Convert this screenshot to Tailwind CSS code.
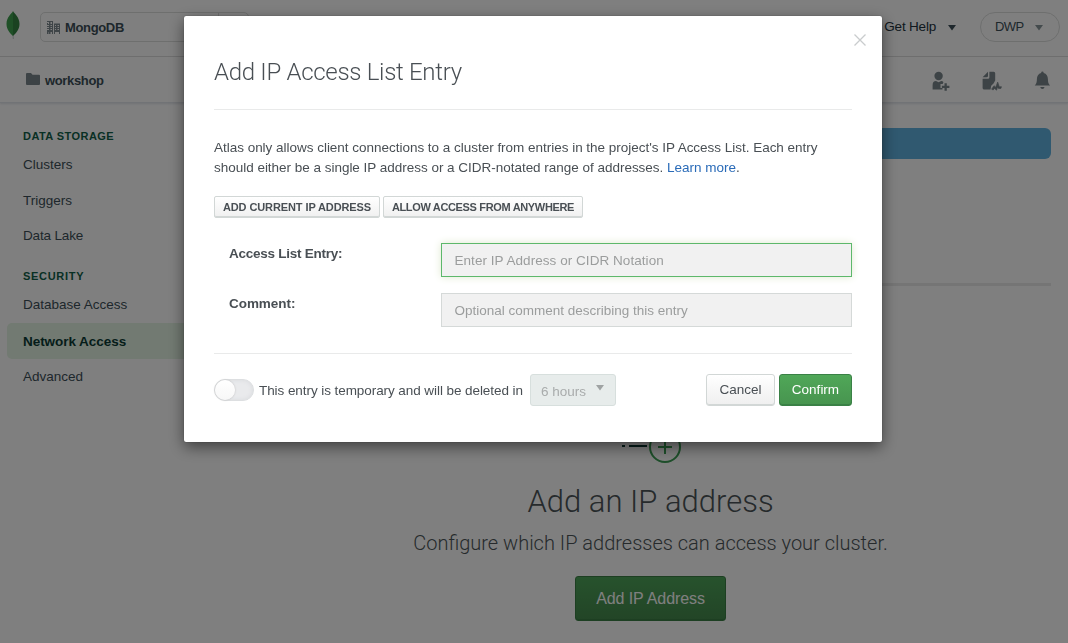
<!DOCTYPE html>
<html lang="en">
<head>
<meta charset="utf-8">
<title>Network Access</title>
<script src="https://cdn.jsdelivr.net/npm/@tailwindcss/browser@4"></script>
</head>
<body class="h-[643px] w-[1068px] overflow-hidden bg-white font-['Liberation_Sans',Arial,sans-serif] text-[13.5px] text-[#3d4f58]">
<div class="flex h-[643px] flex-col">
  <!-- Organization bar -->
  <header class="flex h-[57px] shrink-0 items-start justify-between border-b border-[#dcdcdc] pl-[6px] pr-[8px]">
    <div class="flex items-start">
      <svg class="mt-[10px] h-[30px] w-[15px]" viewBox="0 0 15 30"><path d="M6.600 24h.8l.3 5h-.9z" fill="#b8c4c2"/><path d="M7 1C5.500 4 .5 7 .5 14c0 6 4 9.500 6.500 12z" fill="#3fa04f"/><path d="M7 1c1.500 3 6.500 6 6.500 13 0 6-4 9.500-6.500 12z" fill="#358443"/></svg>
      <div class="mt-[12px] ml-[19px] flex h-[30px] w-[209px] items-center rounded-[5px] border border-[#dcdedd] pl-[6px]">
        <svg class="h-[13px] w-[13px]" viewBox="0 0 13 13" fill="#7f8b91"><path d="M0 0h6v1H0zM0 2h1v1H0zM2 1h1.500v12H2zM5 1h1v12H5zM0 3h6v1H0zM0 5h6v1H0zM0 7h6v1H0zM0 9h6v2H0zM0 11h1.500v2H0zM7 2.500h6v1.500H7zM7 5h6v1H7zM7 7h6v1H7zM7 9h6v2H7zM7 3h1v10H7zM9 3h1.500v8H9zM12 3h1v10h-1z"/></svg>
        <span class="mt-px ml-[5px] text-[13px] font-bold tracking-[-0.35px]">MongoDB</span>
        <span class="ml-auto h-[28px] w-[30px] border-l border-[#dcdedd]"></span>
      </div>
    </div>
    <div class="mt-[12px] flex h-[30px] items-center">
      <span class="mt-px tracking-[-0.2px] text-[#21313c]">Get Help</span>
      <svg class="mt-px ml-[12px] h-[6px] w-[8px]" viewBox="0 0 8 6"><path d="M0 0h8L4 5.500z" fill="#3d4f58"/></svg>
      <div class="ml-[24px] flex h-[30px] w-[80px] items-center rounded-full border border-[#dcdedd] pl-[14px]">
        <span class="w-[28px] text-[13px] tracking-[-0.6px]">DWP</span>
        <svg class="mt-px ml-[12px] h-[6px] w-[8px]" viewBox="0 0 8 6"><path d="M0 0h8L4 5.500z" fill="#89979b"/></svg>
      </div>
    </div>
  </header>
  <!-- Project bar -->
  <div class="flex h-[46px] shrink-0 items-center border-b border-[#e3e6ec] pl-[26px] pr-[16px] shadow-[0_1px_2px_#e0e3ea]">
    <svg class="-mt-px h-[12px] w-[14px]" viewBox="0 0 14 12"><path d="M1 0h4l1.500 1.800H13a1 1 0 0 1 1 1V11a1 1 0 0 1-1 1H1a1 1 0 0 1-1-1V1a1 1 0 0 1 1-1z" fill="#7b878c"/></svg>
    <span class="mt-[2px] ml-[5px] text-[13px] font-bold tracking-[-0.35px]">workshop</span>
    <div class="mt-[3px] ml-auto flex items-center">
      <svg class="h-[20px] w-[18px]" viewBox="0 0 18 20" fill="#7b878c"><circle cx="6.600" cy="5" r="4.200"/><path d="M.6 18.500v-4.300Q.6 10 4 10l2.600 1.200L9.200 10q1.600 0 2.300 1.300-.7.500-.7 1.700H8.500v4h2v1.500z"/><path d="M12.500 12.200h2.300v2.600h2.600v2.300h-2.600v2.600h-2.300v-2.600H9.900v-2.300h2.600z"/></svg>
      <svg class="ml-[32px] h-[20px] w-[20px]" viewBox="0 0 20 20" fill="#7b878c"><path d="M.6 6.300 6 .8v4q0 1.500-1.500 1.500z"/><path d="M7.400.8h4.300q1.500 0 1.500 1.500v7.200l-1.700 3-2.300 2.300-.7 3.800H2.300q-1.700 0-1.700-1.700V7.700H6q1.400 0 1.400-1.500z"/><path d="M9.600 18.200l2.400-3.500 1.700 1.500 2-5.200 1.600 4.700h2.200l-.6 1.800h-2.400l-1-1.300-.9 3-2.200-1.800-1.200 1.600z" stroke="#7b878c" stroke-width=".6"/></svg>
      <svg class="ml-[31px] mr-px h-[20px] w-[18px]" viewBox="0 0 18 20" fill="#7b878c"><path d="M9.400.5q1.200 0 1.300 1.400c2.800.7 4.200 3 4.200 6 0 3 .5 4.600 2.200 6.600H1.700C3.400 12.500 3.900 10.900 3.900 7.900c0-3 1.400-5.300 4.200-6Q8.200.5 9.400.5zM7.200 16h4.400q-.5 2-2.200 2t-2.200-2z"/></svg>
    </div>
  </div>
  <div class="flex grow">
    <nav class="flex w-[205px] shrink-0 flex-col pl-[7px] pt-[25px]">
      <h2 class="h-[16px] pl-[16px] text-[11px] font-bold leading-[16px] tracking-[0.45px] text-[#116149]">DATA STORAGE</h2>
      <a class="mt-[3px] h-[36px] pl-[16px] leading-[36px]">Clusters</a>
      <a class="h-[35px] pl-[16px] leading-[35px]">Triggers</a>
      <a class="h-[36px] pl-[16px] leading-[36px] tracking-[-0.15px]">Data Lake</a>
      <h2 class="mt-[14px] h-[16px] pl-[16px] text-[11px] font-bold leading-[16px] tracking-[0.7px] text-[#116149]">SECURITY</h2>
      <a class="mt-[3px] h-[36px] pl-[16px] leading-[36px]">Database Access</a>
      <a class="h-[36px] rounded-[5px] bg-[#e4f4e4] pl-[16px] font-bold leading-[37px] tracking-[-0.05px] text-[#0b3b35]">Network Access</a>
      <a class="h-[36px] pl-[16px] leading-[36px]">Advanced</a>
    </nav>
    <main class="flex w-[846px] shrink-0 flex-col pt-[25px] pl-[46px]">
      <div class="h-[31px] w-[800px] rounded-[6px] bg-[#60b2e0]"></div>
      <div class="mt-[124px] h-[3px] w-[800px] bg-[#ebebeb]"></div>
      <div class="-ml-px flex flex-col items-center">
        <svg class="mt-[146px] ml-[2px] h-[32px] w-[60px]" viewBox="0 0 60 32" fill="none"><path d="M0 14h3M7 14h18" stroke="#0b3b35" stroke-width="2"/><circle cx="43" cy="15" r="15" stroke="#3c9f55" stroke-width="2"/><path d="M43 8v14M36 15h14" stroke="#3c9f55" stroke-width="2"/></svg>
        <h1 class="mt-[20px] text-[31px] font-light leading-[36px] text-[#4c5558] font-['Roboto',sans-serif]">Add an IP address</h1>
        <p class="mt-[9px] text-[20px] font-light leading-[28px] text-[#4c5558] font-['Roboto',sans-serif]">Configure which IP addresses can access your cluster.</p>
        <button class="mt-[19px] h-[45px] w-[151px] rounded-[3px] border border-[#3a7f44] bg-linear-to-b from-[#4ea55a] to-[#458a4d] text-[16px] tracking-[-0.1px] text-white shadow-[inset_0_-1px_0_#3a7f44]">Add IP Address</button>
      </div>
    </main>
  </div>
</div>

<!-- Modal -->
<div class="fixed inset-0 flex items-start bg-black/50 pt-[16px] pl-[184px]">
  <section class="flex h-[426px] w-[698px] flex-col rounded-[2px] bg-white px-[30px] text-[#494f54] shadow-[0_5px_15px_rgba(0,0,0,0.5),0_0_1px_#333]">
    <div class="-mr-[15px] flex h-[30px] items-end justify-end">
      <svg class="h-[12px] w-[14px]" viewBox="0 0 14 12" fill="none" stroke="#c9cccd" stroke-width="1.300"><path d="M1.500.5l11 11M12.500.5l-11 11"/></svg>
    </div>
    <h2 class="mt-[10px] h-[54px] border-b border-[#e9eaea] text-[24px] font-light leading-[32px] tracking-[-0.3px] font-['Roboto',sans-serif]">Add IP Access List Entry</h2>
    <p class="mt-[28px] whitespace-nowrap leading-[20px] tracking-[-0.02px]">Atlas only allows client connections to a cluster from entries in the project's IP Access List. Each entry<br>should either be a single IP address or a CIDR-notated range of addresses. <a class="text-[#2a6bb8]">Learn more</a>.</p>
    <div class="mt-[18px] flex gap-[3px] text-[11px] font-bold">
      <button class="h-[22px] w-[166px] rounded-[2px] border border-[#d2d7d6] bg-linear-to-b from-white to-[#f0f0f0] tracking-[-0.1px] shadow-[inset_0_-1px_0_#d2d7d6]">ADD CURRENT IP ADDRESS</button>
      <button class="h-[22px] w-[200px] rounded-[2px] border border-[#d2d7d6] bg-linear-to-b from-white to-[#f0f0f0] tracking-[-0.34px] shadow-[inset_0_-1px_0_#d2d7d6]">ALLOW ACCESS FROM ANYWHERE</button>
    </div>
    <div class="mt-[25px] flex h-[34px]">
      <label class="w-[227px] pl-[15px] pt-px font-bold leading-[20px] tracking-[-0.25px]">Access List Entry:</label>
      <div class="h-[34px] w-[411px] border border-[#5db86b] bg-[#f1f1f1] pl-[12.500px] leading-[33px] tracking-[0.05px] text-[#9b9d9d] shadow-[0_0_8px_#dfe8cf]">Enter IP Address or CIDR Notation</div>
    </div>
    <div class="mt-[16px] flex h-[34px]">
      <label class="w-[227px] pl-[15px] pt-px font-bold leading-[20px] tracking-[-0.05px]">Comment:</label>
      <div class="h-[34px] w-[411px] border border-[#d5d9d8] bg-[#f1f1f1] pl-[12.500px] leading-[33px] text-[#9b9d9d]">Optional comment describing this entry</div>
    </div>
    <div class="mt-[26px] flex items-center border-t border-[#e9eaea] pt-[20px]">
      <div class="h-[22px] w-[40px] rounded-full border border-[#dddfe1] bg-[#e9eaec] shadow-[inset_0_0_4px_#d8dadd]"><div class="h-[20px] w-[20px] rounded-full bg-linear-to-b from-white to-[#f7f7f7] shadow-[0_0_2px_#b5b5b5]"></div></div>
      <span class="mt-[2px] ml-[5px] w-[271px] tracking-[-0.07px]">This entry is temporary and will be deleted in</span>
      <div class="flex h-[32px] w-[86px] rounded-[3px] border border-[#d7dfdd] bg-[#e7eceb] pl-[10px] text-[#a9acac]"><span class="w-[45px] whitespace-nowrap leading-[33px]">6 hours</span><svg class="mt-[10px] ml-[10px] h-[6px] w-[8px]" viewBox="0 0 8 6"><path d="M0 0h8L4 5.500z" fill="#9fa3a3"/></svg></div>
      <button class="ml-auto h-[32px] w-[69px] rounded-[3px] border border-[#d2d7d6] bg-linear-to-b from-white to-[#efefef] shadow-[inset_0_-1px_0_#d2d7d6]">Cancel</button>
      <button class="ml-[4px] h-[32px] w-[73px] rounded-[3px] border border-[#3a8146] bg-linear-to-b from-[#50a758] to-[#47944f] text-white shadow-[inset_0_-1px_0_#3a8146]">Confirm</button>
    </div>
  </section>
</div>
</body>
</html>
